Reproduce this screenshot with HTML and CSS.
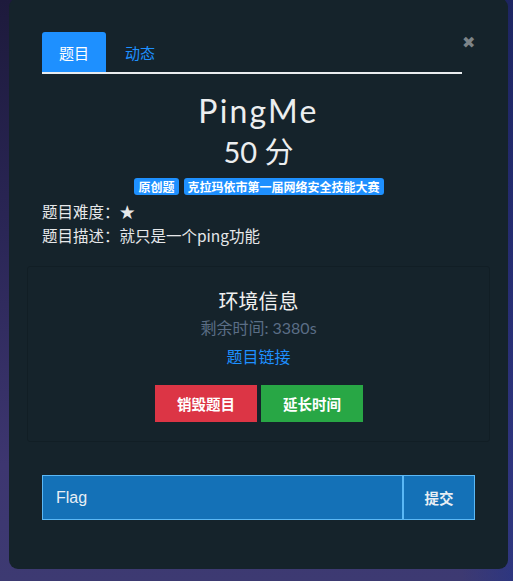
FILE: index.html
```html
<!DOCTYPE html>
<html lang="zh">
<head>
<meta charset="utf-8">
<link rel="stylesheet" href="styles.css">
</head>
<body>
<div class="modal">
  <div class="tabs">
    <div class="tab active">题目</div>
    <div class="tab">动态</div>
  </div>
  <span class="close">&#10006;</span>
  <h1 class="title">PingMe</h1>
  <div class="score">50 分</div>
  <div class="badges">
    <span class="badge">原创题</span>
    <span class="badge">克拉玛依市第一届网络安全技能大赛</span>
  </div>
  <div class="info">
    <div>题目难度：★</div>
    <div>题目描述：就只是一个ping功能</div>
  </div>
  <div class="env">
    <div class="env-title">环境信息</div>
    <div class="env-time">剩余时间: 3380s</div>
    <div class="env-link">题目链接</div>
    <div class="env-buttons">
      <button class="btn btn-red">销毁题目</button>
      <button class="btn btn-green">延长时间</button>
    </div>
  </div>
  <div class="flag">
    <div class="flag-input">Flag</div>
    <button class="flag-submit">提交</button>
  </div>
</div>
</body>
</html>
```

FILE: styles.css
```css
* { box-sizing: border-box; }
html, body { margin: 0; height: 581px; overflow: hidden; }
body {
  background:
    linear-gradient(90deg, rgba(40,30,90,0.0) 0%, rgba(40,30,90,0.0) 90%, rgba(30,50,140,0.5) 100%),
    linear-gradient(180deg, #1d1a3c 0%, #2a2656 40%, #3d3670 80%, #3d3a72 100%);
  font-family: "Noto Sans CJK SC", "Lato", sans-serif;
  color: #e6e8ea;
}
.modal {
  position: relative;
  margin-left: 9px;
  margin-top: -2px;
  width: 499px;
  height: 571px;
  background: #15232b;
  border-radius: 9px;
  padding-top: 34px;
}
.tabs {
  display: flex;
  margin: 0 46px 0 33px;
  border-bottom: 2px solid #e9ecef;
  height: 42px;
}
.tab {
  width: 64px;
  height: 40px;
  display: flex;
  align-items: center;
  justify-content: center;
  font-size: 15px;
  color: #1e90ff;
  border-radius: 3px 3px 0 0;
  margin-right: 2px;
}
.tab.active { background: #1e90ff; color: #fff; }
.close {
  position: absolute;
  top: 37px;
  left: 453px;
  font-size: 16px;
  line-height: 16px;
  color: #7d8488;
  font-family: "DejaVu Sans", sans-serif;
  font-weight: bold;
}
.title {
  margin: 15px 0 0;
  text-align: center;
  font-family: "Lato", sans-serif;
  font-weight: 400;
  font-size: 32px;
  line-height: 44px;
  letter-spacing: 2.2px;
  color: #eceeef;
}
.score {
  text-align: center;
  font-family: "Lato", "Noto Sans CJK SC", sans-serif;
  font-size: 29px;
  line-height: 38px;
  color: #eceeef;
}
.badges {
  display: flex;
  justify-content: center;
  gap: 5px;
  margin-top: 7px;
  margin-left: 1px;
}
.badge {
  background: #1e90ff;
  color: #fff;
  font-size: 12px;
  font-weight: bold;
  line-height: 17px;
  padding: 0 4px;
  border-radius: 3px;
}
.info {
  margin: 4px 0 0 33px;
  font-size: 15.5px;
  line-height: 24px;
}
.env {
  margin: 19px 18px 0 18px;
  border: 1px solid #111e25;
  border-radius: 3px;
  height: 176px;
  display: flex;
  flex-direction: column;
  align-items: center;
  padding-top: 21px;
}
.env-title { font-size: 20px; line-height: 26px; color: #f0f0f0; }
.env-time { font-size: 16px; line-height: 22px; color: #5b6e86; margin-top: 3px; font-family: "Lato", "Noto Sans CJK SC", sans-serif; }
.env-link { font-size: 16px; line-height: 22px; color: #1e90ff; margin-top: 6px; }
.env-buttons { display: flex; gap: 4px; margin-top: 18px; margin-left: 1px; }
.btn {
  width: 102px;
  height: 37px;
  border: none;
  color: #fff;
  font-family: "Noto Sans CJK SC", sans-serif;
  font-size: 14.5px;
  font-weight: bold;
}
.btn-red { background: #dc3545; }
.btn-green { background: #28a745; }
.flag {
  display: flex;
  margin: 33px 33px 0 33px;
  height: 45px;
}
.flag-input {
  width: 363px;
  background: #1471b7;
  border: 1px solid #5bb8f5;
  border-right: 2px solid #5bb8f5;
  color: #e8eef4;
  font-family: "Liberation Sans", sans-serif;
  font-size: 16px;
  display: flex;
  align-items: center;
  padding-left: 13px;
}
.flag-submit {
  width: 71px;
  background: #1471b7;
  border: 1px solid #5bb8f5;
  border-left: none;
  color: #e8eef4;
  font-family: "Noto Sans CJK SC", sans-serif;
  font-size: 14.5px;
  font-weight: bold;
}
```
